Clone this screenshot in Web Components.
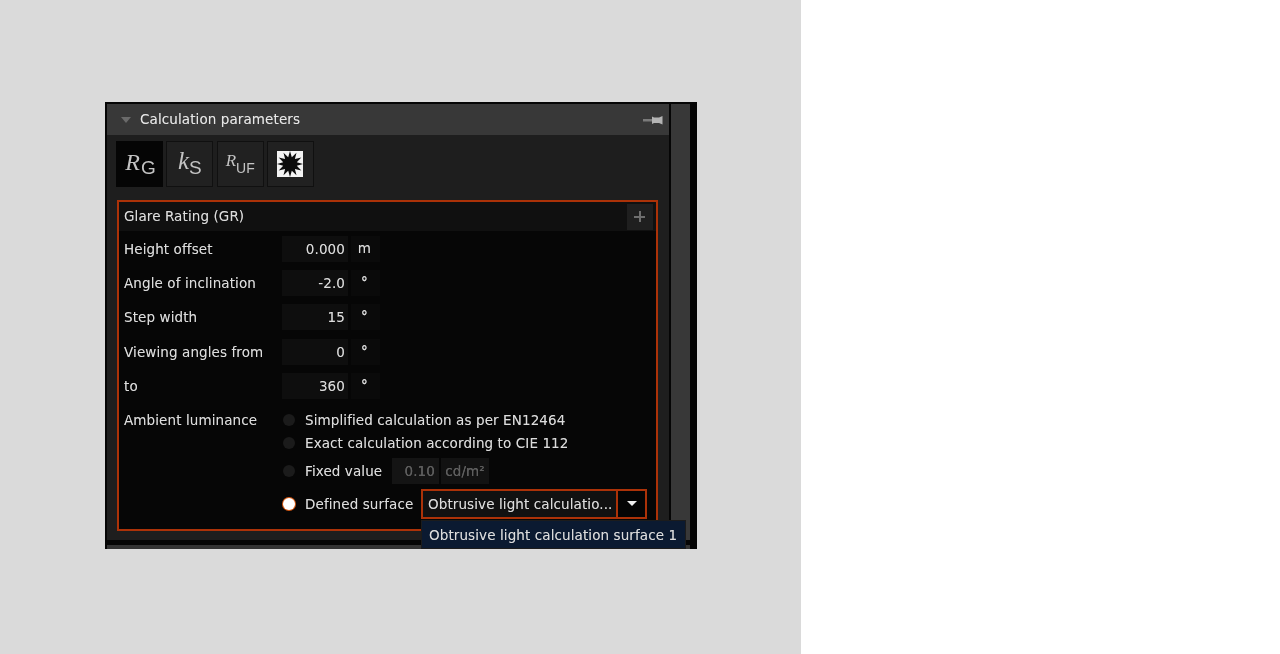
<!DOCTYPE html>
<html>
<head>
<meta charset="utf-8">
<style>
  html, body { margin: 0; height: 100%; background: #fff; }
  body { font: 13.5px "DejaVu Sans", "Liberation Sans", sans-serif; letter-spacing: .1px; color: #dcdcdc; }
  #backdrop { width: 801px; height: 654px; background: #dadada; padding: 102px 0 0 105px; box-sizing: border-box; }
</style>
</head>
<body>
<div id="backdrop">
  <calc-window>
    <calc-tabs>
      <calc-tab active><i>R</i><b>G</b></calc-tab>
      <calc-tab><i class="k">k</i><b>S</b></calc-tab>
      <calc-tab small><i>R</i><b>UF</b></calc-tab>
      <calc-tab><calc-star></calc-star></calc-tab>
    </calc-tabs>
    <calc-group title="Glare Rating (GR)">
      <calc-field label="Height offset" value="0.000" unit="m"></calc-field>
      <calc-field label="Angle of inclination" value="-2.0" unit="°"></calc-field>
      <calc-field label="Step width" value="15" unit="°"></calc-field>
      <calc-field label="Viewing angles from" value="0" unit="°"></calc-field>
      <calc-field label="to" value="360" unit="°"></calc-field>
      <calc-ambient></calc-ambient>
    </calc-group>
  </calc-window>
</div>
<script>
class CalcWindow extends HTMLElement {
  constructor() {
    super();
    this.attachShadow({ mode: 'open' }).innerHTML = `
      <style>
        :host { display: flex; flex-direction: column; position: relative; width: 592px; height: 447px; box-sizing: border-box; padding: 2px 7px 0 2px; background: #050505; filter: blur(.4px); text-shadow: 0 0 .6px rgba(255,255,255,.35); }
        .top { display: flex; gap: 2px; height: 436px; }
        .main { width: 562px; background: #1e1e1e; display: flex; flex-direction: column; }
        .scroll { width: 19px; background: #383838; }
        .head { height: 31px; flex: none; display: flex; align-items: center; background: #383838; padding: 0 6px 0 14px; }
        .arrow { width: 0; height: 0; border: 5.500px solid transparent; border-top: 6px solid #6a6a6a; border-bottom: 0; margin-right: 9px; }
        .title { flex: 1; color: #e6e6e6; position: relative; top: -1px; }
        .body { padding: 6px 11px 0 9px; }
        .foot { height: 4px; margin-top: 5px; background: #333; }
      </style>
      <div class="top">
        <div class="main">
          <div class="head">
            <span class="arrow"></span>
            <span class="title">Calculation parameters</span>
            <svg width="20" height="12" viewBox="0 0 20 12"><path d="M0 5h9v2.500H0z" fill="#7a7a7a"/><path d="M9 2.500l2 1h5L19.500 2v8.500L16 9h-5l-2 1z" fill="#b4b4b4"/></svg>
          </div>
          <div class="body"><slot></slot></div>
        </div>
        <div class="scroll"></div>
      </div>
      <div class="foot"></div>`;
  }
}

class CalcTabs extends HTMLElement {
  constructor() {
    super();
    this.attachShadow({ mode: 'open' }).innerHTML = `
      <style>:host { display: flex; gap: 3.330px; margin-bottom: 13px; }</style>
      <slot></slot>`;
  }
}

class CalcTab extends HTMLElement {
  constructor() {
    super();
    this.attachShadow({ mode: 'open' }).innerHTML = `
      <style>
        :host { display: flex; align-items: center; justify-content: center; width: 47px; height: 46px; box-sizing: border-box; background: #212121; border: 1px solid #101010; color: #c4c4c4; text-shadow: none; letter-spacing: 0; }
        :host([active]) { background: #050505; border-color: #050505; padding-left: 2px; }
        ::slotted(i) { font: italic 24px "Liberation Serif", serif; margin: -4px 1px 0 0; }
        ::slotted(i.k) { font-size: 25px; margin-top: -6px; margin-right: 0; }
        ::slotted(b) { font: 19px "Liberation Sans", sans-serif; margin-top: 7px; }
        :host([small]) ::slotted(i) { font-size: 17px; margin: -7px 0 0 0; }
        :host([small]) ::slotted(b) { font-size: 14px; margin-top: 7px; }
      </style>
      <slot></slot>`;
  }
}

// starburst on a white square, spikes reach almost to the edge
class CalcStar extends HTMLElement {
  constructor() {
    super();
    let pts = [];
    for (let n = 0; n < 24; n++) {
      const r = n % 2 ? 7 : 13;
      const a = n * Math.PI / 12 - Math.PI / 2;
      pts.push((13 + r * Math.cos(a)).toFixed(1) + ',' + (13 + r * Math.sin(a)).toFixed(1));
    }
    this.attachShadow({ mode: 'open' }).innerHTML = `
      <style>:host { display: block; width: 26px; height: 26px; }</style>
      <svg width="26" height="26" viewBox="0 0 26 26"><rect width="26" height="26" fill="#f4f4f4"/><polygon fill="#0c0c0c" points="${pts.join(' ')}"/></svg>`;
  }
}

class CalcGroup extends HTMLElement {
  constructor() {
    super();
    this.attachShadow({ mode: 'open' }).innerHTML = `
      <style>
        :host { display: block; margin-left: 1px; height: 331px; box-sizing: border-box; border: 2px solid #ac3208; background: #060606; }
        .bar { height: 29px; display: flex; align-items: center; justify-content: space-between; background: #101010; padding: 0 3px 0 5px; }
        .bar span:first-child { position: relative; top: -1px; }
        .plus { width: 26px; height: 26px; background: #1f1f1f; position: relative; }
        .plus::before, .plus::after { content: ""; position: absolute; background: #6e6e6e; }
        .plus::before { left: 7px; top: 12px; width: 11px; height: 2px; }
        .plus::after { left: 11.500px; top: 7.500px; width: 2px; height: 11px; }
        .rows { display: flex; flex-direction: column; gap: 8.200px; padding: 5px 0 0 5px; }
      </style>
      <div class="bar"><span>${this.getAttribute('title')}</span><span class="plus"></span></div>
      <div class="rows"><slot></slot></div>`;
  }
}

class CalcField extends HTMLElement {
  constructor() {
    super();
    const unit = this.getAttribute('unit');
    this.attachShadow({ mode: 'open' }).innerHTML = `
      <style>
        :host { display: flex; align-items: center; height: 26px; }
        .lbl { width: 158px; white-space: nowrap; }
        .val { width: 66px; height: 26px; line-height: 26px; box-sizing: border-box; padding-right: 3px; text-align: right; background: #0e0e0e; }
        .unit { width: 29px; height: 26px; line-height: 25px; margin-left: 3px; box-sizing: border-box; padding-right: 2px; text-align: center; background: #0a0a0a; font-weight: ${unit === '°' ? 'bold' : 'normal'}; }
      </style>
      <span class="lbl">${this.getAttribute('label')}</span>
      <span class="val">${this.getAttribute('value')}</span>
      <span class="unit">${unit}</span>`;
  }
}

class CalcRadio extends HTMLElement {
  constructor() {
    super();
    this.attachShadow({ mode: 'open' }).innerHTML = `
      <style>
        :host { display: flex; align-items: center; height: 23px; gap: 9px; white-space: nowrap; }
        .dot { width: 12px; height: 12px; margin: 0 1px; border-radius: 50%; background: #1b1b1b; flex: none; }
        :host([on]) .dot { background: #fff; box-shadow: 0 0 0 1px #d85a14; }
      </style>
      <span class="dot"></span><slot></slot>`;
  }
}

class CalcSelect extends HTMLElement {
  constructor() {
    super();
    this.attachShadow({ mode: 'open' }).innerHTML = `
      <style>
        :host { display: flex; position: relative; width: 226px; height: 30px; box-sizing: border-box; border: 2px solid #ac3208; background: #111; }
        .txt { width: 195px; line-height: 26px; padding-left: 5px; box-sizing: border-box; border-right: 2px solid #ac3208; white-space: nowrap; overflow: hidden; }
        .btn { flex: 1; background: #050505; display: flex; align-items: center; justify-content: center; }
        .btn span { border: 5px solid transparent; border-top: 5px solid #f0f0f0; border-bottom: 0; }
        .menu { position: absolute; left: -2px; top: 29px; width: 265px; height: 29px; box-sizing: border-box; border: 1px solid #1c1c1c; background: #0b1a31; line-height: 28px; padding-left: 7px; white-space: nowrap; }
      </style>
      <div class="txt">Obtrusive light calculatio...</div>
      <div class="btn"><span></span></div>
      <div class="menu">Obtrusive light calculation surface 1</div>`;
  }
}

class CalcAmbient extends HTMLElement {
  constructor() {
    super();
    this.attachShadow({ mode: 'open' }).innerHTML = `
      <style>
        :host { display: flex; height: 110px; padding-top: .500px; margin-top: 1.500px; }
        .lbl { width: 158px; height: 23px; line-height: 23px; }
        .opts { display: flex; flex-direction: column; }
        .fixed { margin-top: 3.500px; height: 26px; }
        .def { margin-top: 5px; height: 30px; }
        .name { width: 78px; }
        .def .name { width: 107px; }
        .in { width: 47px; height: 26px; line-height: 26px; text-align: right; padding-right: 4px; box-sizing: border-box; background: #141414; color: #5e5e5e; }
        .un { width: 48px; height: 26px; line-height: 26px; margin-left: -7px; text-align: center; background: #121212; color: #5e5e5e; }
      </style>
      <span class="lbl">Ambient luminance</span>
      <div class="opts">
        <calc-radio>Simplified calculation as per EN12464</calc-radio>
        <calc-radio>Exact calculation according to CIE 112</calc-radio>
        <calc-radio class="fixed"><span class="name">Fixed value</span><span class="in">0.10</span><span class="un">cd/m²</span></calc-radio>
        <calc-radio class="def" on><span class="name">Defined surface</span><calc-select></calc-select></calc-radio>
      </div>`;
  }
}

customElements.define('calc-window', CalcWindow);
customElements.define('calc-tabs', CalcTabs);
customElements.define('calc-tab', CalcTab);
customElements.define('calc-star', CalcStar);
customElements.define('calc-group', CalcGroup);
customElements.define('calc-field', CalcField);
customElements.define('calc-radio', CalcRadio);
customElements.define('calc-select', CalcSelect);
customElements.define('calc-ambient', CalcAmbient);
</script>
</body>
</html>
